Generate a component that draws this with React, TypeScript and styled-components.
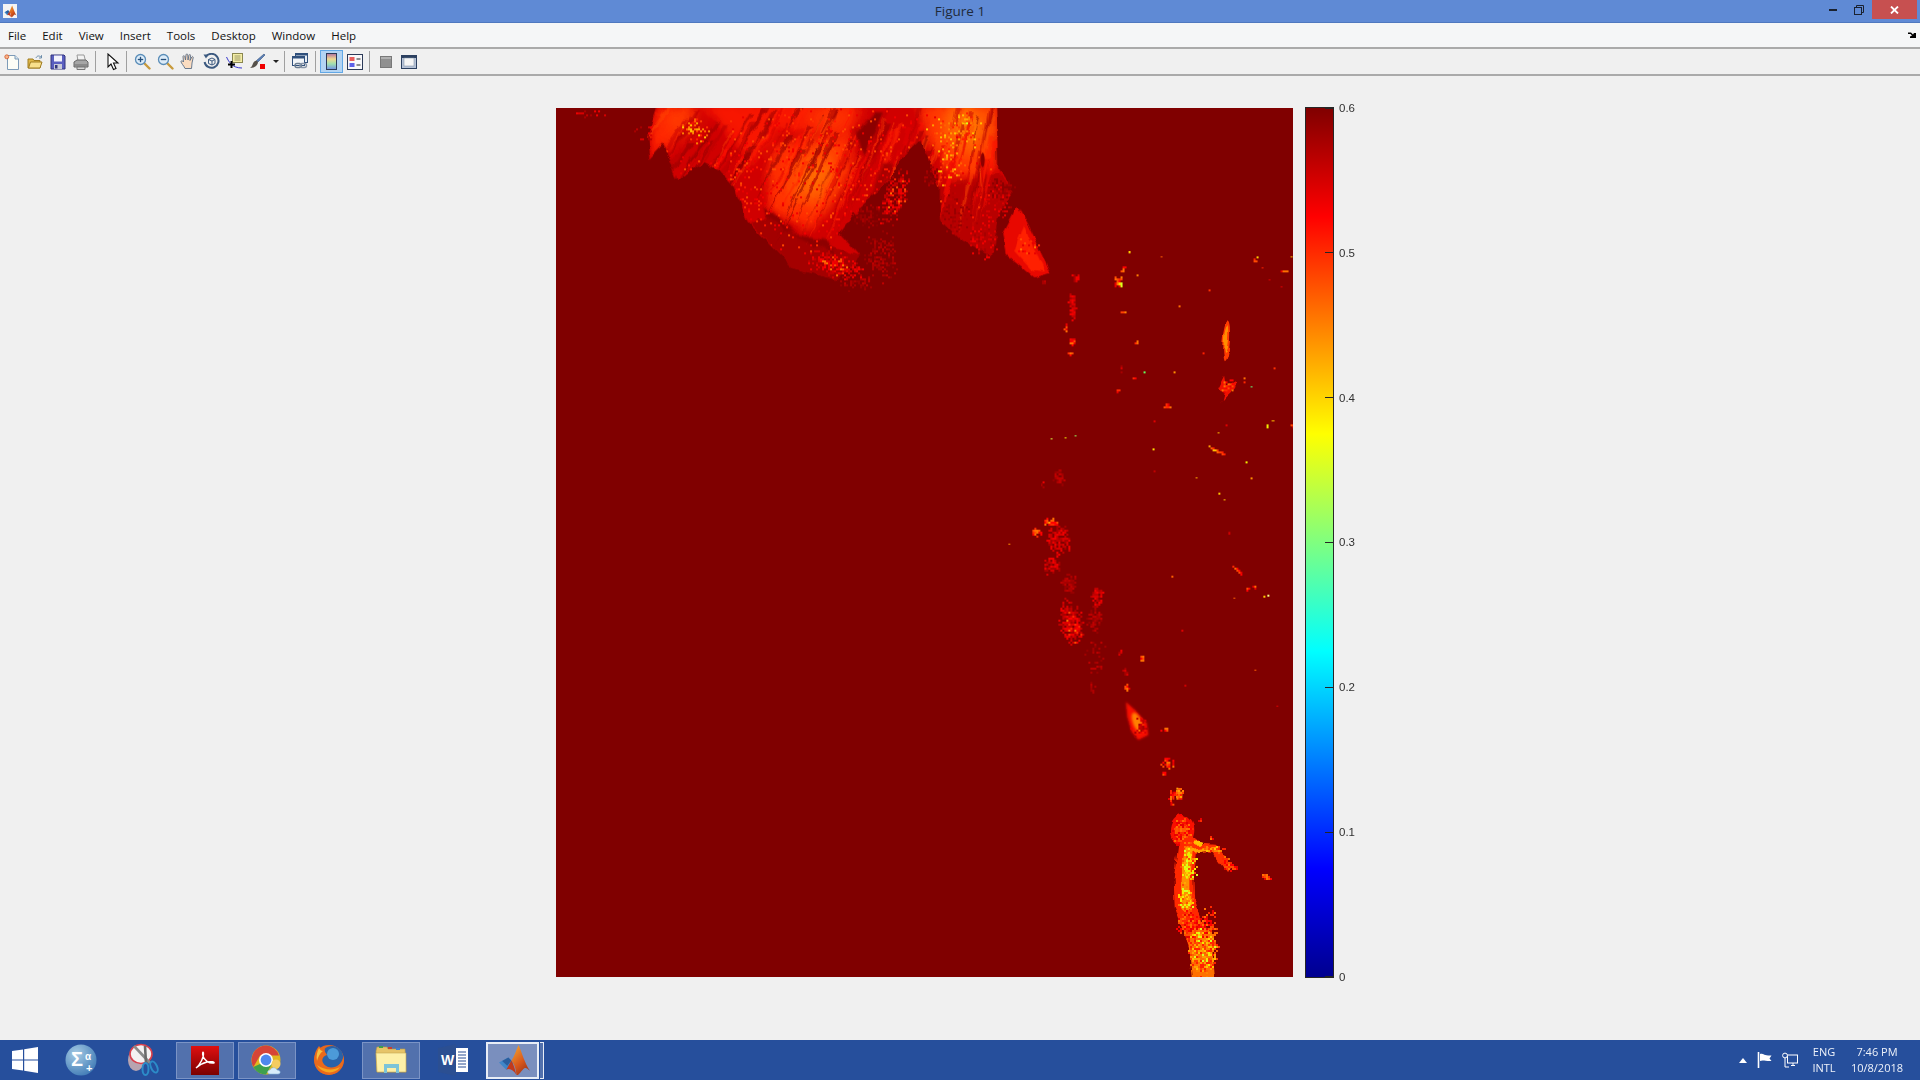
import React from "react";
import styled, { createGlobalStyle } from "styled-components";

const GlobalStyle = createGlobalStyle`
  html, body {
    margin: 0;
    height: 100%;
    overflow: hidden;
    background: #f0f0f0;
    font-family: "Open Sans", "Liberation Sans", sans-serif;
  }
`;

const menuItems = ["File", "Edit", "View", "Insert", "Tools", "Desktop", "Window", "Help"];
const colorbarTicks = ["0.6", "0.5", "0.4", "0.3", "0.2", "0.1", "0"];

type Palette = "faint" | "dim" | "hot" | "flame" | "fire" | "dark" | "grain";
const palettes: Record<Palette, string[]> = {
  faint: ["#980000", "#a40000", "#b00000", "#c00000"],
  dim: ["#a80000", "#c00000", "#d80000", "#f00000"],
  hot: ["#e80000", "#ff0000", "#ff2800", "#ff4c00", "#ff7000"],
  flame: ["#ff2000", "#ff4000", "#ff6000", "#ff8000", "#ffa000", "#ffc000"],
  fire: ["#ff5000", "#ff8000", "#ffa800", "#ffd000", "#f0f000", "#d8ff20"],
  dark: ["#8c0000", "#980000", "#a80000"],
  grain: ["#e80000", "#f40000", "#ff1800", "#ff3000", "#ff4800"],
};

// x, y, rx, ry, angle, count, palette - coordinates in the crop's own units
type Cluster = [number, number, number, number, number, number, Palette];

function makeRandom(seed: number) {
  let s = seed;
  return () => {
    s = (s + 0x6d2b79f5) | 0;
    let t = Math.imul(s ^ (s >>> 15), 1 | s);
    t = (t + Math.imul(t ^ (t >>> 7), 61 | t)) ^ t;
    return ((t ^ (t >>> 14)) >>> 0) / 4294967296;
  };
}

function Specks({ clusters, seed, cell = 6 }: { clusters: Cluster[]; seed: number; cell?: number }) {
  const random = makeRandom(seed);
  const rects: React.ReactNode[] = [];
  clusters.forEach(([cx, cy, rx, ry, angle, count, palette], i) => {
    const colours = palettes[palette];
    const a = (angle * Math.PI) / 180;
    for (let n = 0; n < count; n++) {
      const r = Math.sqrt(random()) * (0.5 + 0.5 * random());
      const t = random() * Math.PI * 2;
      const dx = Math.cos(t) * r * rx;
      const dy = Math.sin(t) * r * ry;
      const x = cx + dx * Math.cos(a) - dy * Math.sin(a);
      const y = cy + dx * Math.sin(a) + dy * Math.cos(a);
      rects.push(
        <rect
          key={`${i}-${n}`}
          x={Math.round(x / cell) * cell}
          y={Math.round(y / cell) * cell}
          width={cell}
          height={cell}
          fill={colours[Math.floor(random() * colours.length)]}
        />
      );
    }
  });
  return <g shapeRendering="crispEdges">{rects}</g>;
}

// tapered streaks fanning down-left from the top edge of the plume
function Streaks({ seed, count }: { seed: number; count: number }) {
  const random = makeRandom(seed);
  const colours = ["#8c0000", "#a00000", "#b80000", "#ff2000", "#ff4400", "#e00000", "#ff1000", "#980000", "#c80000"];
  const items: React.ReactNode[] = [];
  for (let i = 0; i < count; i++) {
    const x = 130 + random() * 1000;
    const y = 10 + random() * 200;
    const lean = -0.7 + (0.55 * (x - 130)) / 1000;
    const length = 70 + random() * 220;
    const width = 4 + random() * 16;
    const colour = colours[Math.floor(random() * colours.length)];
    items.push(
      <path
        key={i}
        d={`M${x} ${y} L${x + width} ${y} L${x + lean * length} ${y + length} Z`}
        fill={colour}
        opacity={0.55}
      />
    );
  }
  return <g>{items}</g>;
}

const plumeOutline =
  "M115 10 L82 110 L88 178 L130 130 L172 238 L250 190 L300 215 L342 262 L382 362 L520 505 L650 540 L720 470 L660 400 L720 320 L800 250 L840 180 L900 120 L960 260 L960 360 L1020 420 L1115 470 L1140 340 L1180 270 L1135 210 L1128 10 Z M1192 320 L1222 370 L1292 520 L1240 532 L1160 465 L1150 400 Z";

const plumeGrain: Cluster[] = [[620, 230, 540, 260, 0, 650, "grain"]];

const plumeSpecks: Cluster[] = [
  [-90, 38, 70, 14, 0, 12, "dim"],
  [70, 95, 40, 40, 0, 14, "dim"],
  [1010, 90, 100, 70, 0, 90, "flame"],
  [1040, 60, 12, 24, 0, 16, "fire"],
  [225, 85, 60, 45, 20, 40, "flame"],
  [985, 190, 55, 70, 0, 50, "flame"],
  [935, 225, 30, 40, 0, 34, "dark"],
  [1140, 265, 45, 35, 0, 120, "dark"],
  [1125, 300, 55, 70, 0, 60, "dim"],
  [740, 345, 45, 40, 0, 70, "dark"],
  [820, 290, 45, 105, 15, 180, "dim"],
  [830, 280, 35, 90, 15, 30, "hot"],
  [780, 465, 60, 85, 0, 130, "faint"],
  [640, 490, 95, 45, 15, 240, "dim"],
  [640, 490, 70, 30, 15, 40, "hot"],
  [710, 545, 55, 35, 0, 45, "faint"],
  [1090, 410, 50, 75, 0, 90, "dim"],
  [1000, 340, 55, 75, 0, 90, "faint"],
  [1220, 440, 40, 40, 0, 20, "hot"],
  [1268, 545, 12, 6, 0, 6, "dim"],
];

const midSpecks: Cluster[] = [
  [160, 82, 16, 11, 0, 30, "dim"],
  [150, 160, 13, 50, 0, 80, "dim"],
  [130, 228, 5, 12, 0, 10, "hot"],
  [150, 265, 14, 14, 0, 26, "hot"],
  [145, 300, 6, 10, 0, 8, "hot"],
  [285, 92, 11, 20, 0, 28, "hot"],
  [290, 92, 6, 20, 0, 6, "fire"],
  [300, 52, 5, 14, 35, 8, "hot"],
  [300, 180, 7, 2, 0, 5, "flame"],
  [340, 268, 3, 6, 0, 4, "hot"],
  [293, 342, 5, 14, 0, 6, "dim"],
  [333, 372, 6, 6, 0, 5, "hot"],
  [285, 410, 7, 3, 0, 4, "hot"],
  [430, 455, 12, 8, 0, 14, "hot"],
  [605, 400, 24, 28, 0, 24, "hot"],
  [652, 382, 3, 14, 0, 6, "hot"],
  [718, 515, 2, 12, 0, 5, "fire"],
  [575, 585, 34, 3, 32, 18, "flame"],
  [110, 665, 18, 26, 0, 36, "faint"],
  [62, 682, 6, 8, 0, 4, "dim"],
  [795, 512, 8, 5, 0, 6, "hot"],
  [768, 60, 14, 4, -15, 6, "hot"],
  [685, 28, 14, 3, 40, 6, "hot"],
];

const midPoints: [number, number, string][] = [
  [90, 550, "#d8ff40"], [158, 541, "#90ff60"], [130, 547, "#f0f000"], [388, 580, "#ffe000"],
  [361, 355, "#60ff60"], [450, 355, "#ff9000"], [596, 728, "#ffc800"], [514, 664, "#ffb000"],
  [675, 398, "#60ff80"], [579, 532, "#ffc000"], [660, 619, "#f0f000"], [737, 497, "#ffc000"],
  [693, 20, "#ffd000"], [318, 4, "#ffd000"], [411, 18, "#ff6000"], [463, 163, "#ff7000"],
  [675, 666, "#ff9000"], [342, 72, "#ff8000"], [790, 18, "#ffc000"], [534, 300, "#ff2000"],
  [742, 343, "#ff3000"], [600, 511, "#e00000"], [390, 499, "#e00000"], [390, 645, "#c00000"],
  [550, 115, "#ff3000"], [705, 50, "#ff2000"], [762, 105, "#e00000"], [727, 85, "#e00000"],
];

const lowerSpecks: Cluster[] = [
  [150, 95, 22, 18, 0, 28, "hot"],
  [105, 125, 20, 14, 0, 24, "hot"],
  [150, 92, 10, 8, 0, 5, "flame"],
  [172, 150, 42, 54, 0, 150, "dim"],
  [150, 225, 30, 28, 0, 60, "dim"],
  [205, 280, 26, 34, 0, 70, "faint"],
  [210, 395, 40, 76, -10, 320, "dim"],
  [215, 410, 28, 58, -10, 24, "hot"],
  [290, 320, 20, 38, 0, 65, "dim"],
  [278, 385, 28, 46, 0, 80, "faint"],
  [285, 500, 38, 62, 0, 32, "faint"],
  [275, 592, 12, 20, 0, 10, "faint"],
  [358, 488, 6, 12, 0, 9, "dim"],
  [425, 505, 5, 15, 0, 9, "hot"],
  [373, 545, 7, 18, -15, 16, "dim"],
  [377, 592, 9, 16, 0, 16, "hot"],
  [420, 710, 30, 38, 0, 36, "dim"],
  [493, 718, 12, 5, 0, 8, "hot"],
  [500, 815, 22, 22, -30, 26, "hot"],
  [490, 852, 6, 10, 0, 6, "hot"],
  [515, 925, 10, 30, 0, 14, "hot"],
  [533, 912, 18, 18, 0, 24, "flame"],
  [712, 240, 26, 2, 40, 12, "hot"],
  [760, 292, 2, 14, 0, 6, "hot"],
  [740, 296, 7, 2, 0, 3, "hot"],
];

const lowerPoints: [number, number, string][] = [
  [656, 8, "#ffc800"], [25, 160, "#ff9000"], [514, 258, "#ff6000"], [790, 318, "#ffd000"],
  [802, 314, "#ffff80"], [700, 322, "#ff6000"], [763, 538, "#ff6000"], [545, 420, "#e00000"],
  [685, 126, "#c00000"], [685, 128, "#d00000"], [554, 584, "#d00000"], [830, 646, "#e00000"],
];

const tailSpecks: Cluster[] = [
  [185, 150, 38, 54, 0, 110, "hot"],
  [237, 120, 7, 7, 0, 8, "hot"],
  [175, 40, 14, 18, 0, 30, "flame"],
  [150, 50, 5, 25, 0, 14, "hot"],
  [205, 250, 30, 58, 0, 60, "fire"],
  [195, 350, 28, 48, 0, 50, "fire"],
  [205, 430, 40, 54, 0, 130, "hot"],
  [248, 510, 52, 90, 0, 380, "flame"],
  [248, 510, 36, 78, 0, 50, "fire"],
  [265, 440, 30, 74, 0, 80, "hot"],
  [280, 205, 38, 10, 5, 40, "flame"],
  [320, 250, 16, 28, -30, 30, "hot"],
  [345, 258, 12, 10, 0, 10, "hot"],
  [275, 172, 10, 5, 0, 6, "hot"],
  [437, 290, 16, 9, 20, 26, "hot"],
  [180, 440, 10, 25, 0, 8, "hot"],
];

const Page = styled.div`
  height: 100vh;
  display: flex;
  flex-direction: column;
  overflow: hidden;
`;

const TitleBar = styled.header`
  box-sizing: border-box;
  height: 23px;
  display: grid;
  grid-template-columns: 1fr auto 1fr;
  align-items: start;
  background: #5f8ad5;
  border-bottom: 1px solid #4f78bf;
`;

const AppIcon = styled.div`
  width: 14px;
  height: 14px;
  margin: 4px 0 0 3px;
  background: #f4f4f4;
  display: flex;
  align-items: center;
  justify-content: center;
`;

const Title = styled.div`
  font-size: 13.5px;
  line-height: 22px;
  color: #1f2a3a;
`;

const WindowControls = styled.div`
  display: flex;
  justify-content: flex-end;
  margin-right: 3px;
`;

const ControlButton = styled.div<{ $close?: boolean }>`
  width: ${(p) => (p.$close ? 45 : 26)}px;
  height: 19px;
  display: flex;
  align-items: center;
  justify-content: center;
  background: ${(p) => (p.$close ? "#c75050" : "transparent")};
`;

const MenuBar = styled.nav`
  box-sizing: border-box;
  height: 26px;
  display: flex;
  align-items: center;
  background: #f5f6f7;
  border-bottom: 2px solid #aaaaaa;
  font-size: 11.5px;
  color: #111;
`;

const MenuItem = styled.span`
  padding: 0 8px;
`;

const UndockArrow = styled.div`
  margin-left: auto;
  margin-right: 4px;
  display: flex;
`;

const ToolBar = styled.div`
  box-sizing: border-box;
  height: 27px;
  display: flex;
  align-items: center;
  background: #f0f0f0;
  border-bottom: 2px solid #aaaaaa;
`;

const ToolButton = styled.div<{ $active?: boolean }>`
  box-sizing: border-box;
  width: 23px;
  height: 23px;
  flex: none;
  display: flex;
  align-items: center;
  justify-content: center;
  background: ${(p) => (p.$active ? "#b3d4f3" : "transparent")};
  border: 1px solid ${(p) => (p.$active ? "#62a8e6" : "transparent")};
`;

const ToolSeparator = styled.div<{ $before: number; $after: number }>`
  width: 1px;
  height: 21px;
  flex: none;
  background: #a0a0a0;
  margin: 0 ${(p) => p.$after}px 0 ${(p) => p.$before}px;
`;

const DropArrow = styled.div`
  width: 0;
  height: 0;
  margin: 0 0 0 4px;
  border-left: 3px solid transparent;
  border-right: 3px solid transparent;
  border-top: 3px solid #222;
`;

const FigureArea = styled.main`
  flex: 1;
  display: flex;
  align-items: flex-start;
  padding: 31px 0 0 556px;
  background: #f0f0f0;
`;

const HeatmapFrame = styled.div`
  width: 737px;
  height: 869px;
  flex: none;
  background: #800000;
  margin-top: 1px;
`;

const Colorbar = styled.div`
  box-sizing: border-box;
  width: 29px;
  height: 871px;
  margin-left: 12px;
  flex: none;
  border: 1px solid #262626;
  background: linear-gradient(
    to bottom,
    #800000 0%,
    #ff0000 12.5%,
    #ffff00 37.5%,
    #00ffff 62.5%,
    #0000ff 87.5%,
    #00008f 100%
  );
`;

const TickColumn = styled.div`
  height: 869px;
  margin-top: 1px;
  flex: none;
  display: flex;
  flex-direction: column;
  justify-content: space-between;
`;

const Tick = styled.div`
  position: relative;
  height: 0;
  display: flex;
  align-items: center;
  padding-left: 5px;
  font-family: "Liberation Sans", Arial, sans-serif;
  font-size: 11.5px;
  color: #303030;

  &::before {
    content: "";
    position: absolute;
    left: -9px;
    width: 8px;
    height: 1px;
    background: #262626;
  }
`;

const Taskbar = styled.footer`
  height: 40px;
  flex: none;
  display: flex;
  align-items: stretch;
  background: #264f9c;
  color: #fff;
`;

const StartButton = styled.div`
  width: 50px;
  display: flex;
  align-items: center;
  justify-content: center;
`;

const TaskSlot = styled.div<{ $state?: "open" | "active" }>`
  box-sizing: border-box;
  width: 58px;
  margin: 2px 2px 1px;
  padding-bottom: 1px;
  display: flex;
  align-items: center;
  justify-content: center;
  border: ${(p) => (p.$state === "active" ? "2px solid #e8edf6" : p.$state === "open" ? "1px solid #7b94c6" : "1px solid transparent")};
  background: ${(p) => (p.$state === "active" ? "#7a8fbe" : p.$state === "open" ? "#5271ad" : "transparent")};
`;

const ActiveGroup = styled.div`
  display: flex;
  align-items: stretch;
  margin-left: 2px;
`;

const ActiveSlot = styled(TaskSlot)`
  width: 53px;
  margin: 2px 1px 1px 0;
  padding-left: 3px;
`;

const StackEdge = styled.div`
  box-sizing: border-box;
  width: 4px;
  margin: 2px 0 1px;
  border: 1px solid #e8edf6;
  border-left: none;
  background: #5271ad;
`;

const Tray = styled.div`
  margin-left: auto;
  display: flex;
  align-items: center;
`;

const TrayIcon = styled.div<{ $width: number }>`
  width: ${(p) => p.$width}px;
  display: flex;
  align-items: center;
  justify-content: center;
`;

const TrayText = styled.div<{ $width: number; $gap?: number }>`
  width: ${(p) => p.$width}px;
  margin-left: ${(p) => p.$gap ?? 0}px;
  text-align: center;
  font-size: 11px;
  line-height: 16px;
  color: #eef2fa;
  white-space: nowrap;
`;

const SigmaBadge = styled.text`
  font-family: "Liberation Sans", Arial, sans-serif;
  font-weight: 700;
  fill: #fff;
`;

const WordLetter = styled.text`
  font-family: "Liberation Sans", Arial, sans-serif;
  font-weight: 700;
  font-size: 14px;
  fill: #fff;
`;

function MatlabLogo({ size }: { size: number }) {
  return (
    <svg width={size} height={size} viewBox="0 0 32 32">
      <defs>
        <linearGradient id={`mlb${size}`} x1="0.2" y1="0" x2="0.8" y2="1">
          <stop offset="0" stopColor="#f0a030" />
          <stop offset="0.55" stopColor="#d8581c" />
          <stop offset="1" stopColor="#96301a" />
        </linearGradient>
      </defs>
      <path d="M1 18 L10 13 L15 19 L8 25 Z" fill="#3f86c8" />
      <path d="M10 13 L13 16 L9 21 L4 16.5 Z" fill="#2a5e9e" />
      <path d="M20 1 C23 8 26 19 31 26 C28 23 26 22 24 25 C22 27 20 31 18 30 C17 23 16 20 13 16 C16 12 18 5 20 1 Z" fill={`url(#mlb${size})`} />
      <path d="M13 16 C15 20 16 23 18 30 C15 26 12 23 8 25 C10 22 11 19 13 16 Z" fill="#c23a1c" />
    </svg>
  );
}

const NewIcon = () => (
  <svg width="16" height="16" viewBox="0 0 16 16">
    <path d="M3.5 1.5 H11 L14.5 5 V15.5 H3.5 Z" fill="#fdfdf6" stroke="#7d9bb8" />
    <path d="M11 1.5 V5 H14.5" fill="#d7e4f0" stroke="#7d9bb8" />
    <circle cx="2.8" cy="2.8" r="2" fill="#f7b48a" stroke="#d4582a" strokeWidth="0.8" />
  </svg>
);

const OpenIcon = () => (
  <svg width="16" height="16" viewBox="0 0 16 16">
    <path d="M1 14 V5 H6 L7 6.5 H13 V14 Z" fill="#e0b848" stroke="#a07c20" />
    <path d="M1.5 14 L3.5 8 H15 L13 14 Z" fill="#f8e08c" stroke="#a07c20" />
    <path d="M9 4 C10 1.5 12 1.5 14 3" fill="none" stroke="#6b8caa" />
    <path d="M14.5 1.2 V4 H12" fill="none" stroke="#6b8caa" />
  </svg>
);

const SaveIcon = () => (
  <svg width="16" height="16" viewBox="0 0 16 16">
    <path d="M1 1 H14 L15 2 V15 H1 Z" fill="#5a5fc0" stroke="#32357c" />
    <rect x="4" y="1.5" width="8" height="6" fill="#f4f4fc" />
    <rect x="4" y="10" width="8" height="5" fill="#c9cbd8" />
    <rect x="5" y="11" width="2.5" height="3.5" fill="#32357c" />
  </svg>
);

const PrintIcon = () => (
  <svg width="16" height="16" viewBox="0 0 16 16">
    <path d="M4 1 L11 1 L12.5 7 H5 Z" fill="#f2f2f2" stroke="#999" />
    <path d="M1 8 L4 6 H13 L15 8 V13 H1 Z" fill="#a6a6a6" stroke="#666" />
    <path d="M1.5 11 H14.5" stroke="#6e6e6e" />
    <path d="M4 13 H12 V15.5 H4 Z" fill="#d8d8d8" stroke="#777" />
  </svg>
);

const PointerIcon = () => (
  <svg width="13" height="18" viewBox="0 0 13 18">
    <path d="M1 1 V14 L4 11 L6.5 16.5 L9 15.5 L6.5 10 H11 Z" fill="#fff" stroke="#111" strokeWidth="1.1" />
  </svg>
);

const ZoomIcon = ({ plus }: { plus?: boolean }) => (
  <svg width="17" height="17" viewBox="0 0 17 17">
    <path d="M10 10 L15.5 15.5" stroke="#c89a3c" strokeWidth="2.4" strokeLinecap="round" />
    <circle cx="6.5" cy="6.5" r="5" fill="#dcebf8" stroke="#5a8db8" strokeWidth="1.3" />
    <path d="M3.8 6.5 H9.2" stroke="#27507c" strokeWidth="1.3" />
    {plus && <path d="M6.5 3.8 V9.2" stroke="#27507c" strokeWidth="1.3" />}
  </svg>
);

const HandIcon = () => (
  <svg width="17" height="17" viewBox="0 0 17 17">
    <path
      d="M5 15.5 C4 13 1 10 1 8.5 C1 7.5 2.5 7.5 3.5 9 L3 3.5 C3 2.5 4.5 2.5 4.8 3.5 L5.5 7 L6 1.8 C6.2 0.7 7.7 0.7 7.8 1.8 L8 7 L9 2.2 C9.3 1.2 10.7 1.4 10.6 2.5 L10 7.5 L11.8 4 C12.3 3.2 13.5 3.6 13.2 4.6 L12 10 C11.5 12 12 14 11.5 15.5 Z"
      fill="#fbdcc0"
      stroke="#5a6d85"
      strokeWidth="0.9"
    />
  </svg>
);

const RotateIcon = () => (
  <svg width="17" height="17" viewBox="0 0 17 17">
    <path d="M3 3.5 A7 7 0 1 1 1.6 9" fill="none" stroke="#3c5a80" strokeWidth="2" />
    <path d="M0.5 1.5 L5.5 1.5 L3 5.5 Z" fill="#3c5a80" />
    <path d="M5.5 6.5 L9 5 L12 6.5 V10.5 L9 12 L5.5 10.5 Z M5.5 6.5 L9 8 L12 6.5 M9 8 V12" fill="none" stroke="#3c5a80" />
  </svg>
);

const DataCursorIcon = () => (
  <svg width="17" height="17" viewBox="0 0 17 17">
    <path d="M0.5 4 C3 9 6 15 16 15" fill="none" stroke="#2020c8" strokeWidth="0.9" />
    <rect x="6.5" y="0.5" width="10" height="9" fill="#f4eea6" stroke="#8a8650" />
    <path d="M8.5 3 H14.5 M8.5 5 H14.5 M8.5 7 H14.5" stroke="#9c9868" />
    <path d="M2 11.5 H9 M5.5 8 V15" stroke="#000" strokeWidth="2" />
  </svg>
);

const BrushIcon = () => (
  <svg width="17" height="17" viewBox="0 0 17 17">
    <path d="M15 1 L16 2 L9 9 L7.5 7.5 Z" fill="#5a80b8" stroke="#34507c" strokeWidth="0.6" />
    <path d="M7.5 7.5 L9 9 C9 12 6 15 1 15 C3.5 13.5 3.5 11 4.5 9.5 C5.5 8 6.5 7.8 7.5 7.5 Z" fill="#55504a" />
    <rect x="11" y="11" width="5" height="5" fill="#f00000" />
  </svg>
);

const LinkIcon = () => (
  <svg width="17" height="17" viewBox="0 0 17 17">
    <rect x="3.5" y="0.5" width="12" height="9" fill="#e6edf4" stroke="#30507c" />
    <rect x="3.5" y="0.5" width="12" height="2" fill="#30507c" />
    <rect x="0.5" y="3.5" width="12" height="9" fill="#f2f5f8" stroke="#30507c" />
    <rect x="0.5" y="3.5" width="12" height="2" fill="#30507c" />
    <rect x="3" y="10.5" width="6.5" height="4" rx="2" fill="none" stroke="#6a7c90" strokeWidth="1.4" />
    <rect x="8" y="10.5" width="6.5" height="4" rx="2" fill="none" stroke="#8795a8" strokeWidth="1.4" />
  </svg>
);

const ColorbarIcon = () => (
  <svg width="11" height="17" viewBox="0 0 11 17">
    <defs>
      <linearGradient id="cbi" x1="0" y1="0" x2="0" y2="1">
        <stop offset="0" stopColor="#b070a0" />
        <stop offset="0.35" stopColor="#f0d890" />
        <stop offset="0.65" stopColor="#a0e0b0" />
        <stop offset="1" stopColor="#7090e8" />
      </linearGradient>
    </defs>
    <rect x="0.5" y="0.5" width="10" height="16" fill="url(#cbi)" stroke="#2c3a58" />
  </svg>
);

const LegendIcon = () => (
  <svg width="16" height="16" viewBox="0 0 16 16">
    <rect x="0.5" y="0.5" width="15" height="15" fill="#f8f8fa" stroke="#2c3a58" />
    <rect x="2.5" y="3" width="5" height="4" fill="#e85c5c" />
    <rect x="2.5" y="9" width="5" height="4" fill="#5c60e8" />
    <path d="M9.5 5 H13.5 M9.5 11 H13.5" stroke="#222" />
  </svg>
);

const HideIcon = () => (
  <svg width="12" height="12" viewBox="0 0 12 12">
    <rect x="0.5" y="0.5" width="11" height="11" fill="#909090" stroke="#787878" />
    <rect x="1" y="1" width="10" height="2" fill="#b0b0b0" />
  </svg>
);

const DockIcon = () => (
  <svg width="16" height="14" viewBox="0 0 16 14">
    <rect x="0.5" y="0.5" width="15" height="13" fill="#b8c4d8" stroke="#2c4060" />
    <rect x="1" y="1" width="14" height="2" fill="#2c4060" />
    <rect x="3" y="3" width="10" height="8" fill="#f6f6f6" stroke="#7a8aa0" strokeWidth="0.5" />
  </svg>
);

const WindowsLogo = () => (
  <svg width="26" height="26" viewBox="0 0 26 26">
    <path d="M0 4 L11 2.4 V12.4 H0 Z M12.2 2.2 L26 0 V12.4 H12.2 Z M0 13.6 H11 V23.6 L0 22 Z M12.2 13.6 H26 V26 L12.2 23.8 Z" fill="#fff" />
  </svg>
);

const SigmaIcon = () => (
  <svg width="32" height="34" viewBox="0 0 32 34">
    <defs>
      <radialGradient id="sig" cx="0.35" cy="0.3" r="0.8">
        <stop offset="0" stopColor="#a6cbe4" />
        <stop offset="1" stopColor="#3c78b4" />
      </radialGradient>
    </defs>
    <circle cx="16" cy="17" r="15.5" fill="url(#sig)" />
    <SigmaBadge x="6" y="23" fontSize="20">Σ</SigmaBadge>
    <SigmaBadge x="20" y="17" fontSize="10">α</SigmaBadge>
    <SigmaBadge x="21" y="29" fontSize="11">+</SigmaBadge>
  </svg>
);

const SnipIcon = () => (
  <svg width="32" height="34" viewBox="0 0 32 34">
    <ellipse cx="9" cy="17" rx="8" ry="11" fill="#b8a4b0" />
    <ellipse cx="14" cy="11" rx="11" ry="9.5" fill="#f4f2f2" stroke="#d8404c" strokeWidth="1.6" />
    <path d="M7 3 L23 20" stroke="#8a8a8a" strokeWidth="2.6" />
    <path d="M18 3 L19 20" stroke="#6a6a6a" strokeWidth="2.6" />
    <ellipse cx="18.5" cy="26" rx="3" ry="6" fill="none" stroke="#2c8cc8" strokeWidth="2" />
    <ellipse cx="27" cy="24" rx="3" ry="6" transform="rotate(-25 27 24)" fill="none" stroke="#2c8cc8" strokeWidth="2" />
  </svg>
);

const AcrobatIcon = () => (
  <svg width="28" height="29" viewBox="0 0 28 29">
    <defs>
      <linearGradient id="acr" x1="0" y1="0" x2="0" y2="1">
        <stop offset="0" stopColor="#e01010" />
        <stop offset="1" stopColor="#7a0000" />
      </linearGradient>
    </defs>
    <rect width="28" height="29" fill="url(#acr)" />
    <path d="M5 22 C9 19 13 11 12.5 7 C12 5 11 7 12 10 C13 14 18 18 23 17 C24 16 20 15 16 16 C12 17 8 19 5 22 Z" fill="none" stroke="#fff" strokeWidth="1.3" />
  </svg>
);

const ChromeIcon = () => (
  <svg width="32" height="34" viewBox="0 0 32 34">
    <circle cx="15" cy="17" r="14.5" fill="#e0b820" />
    <path d="M15 2.5 A14.5 14.5 0 0 0 2.4 24 L9 12.5 H28 A14.5 14.5 0 0 0 15 2.5 Z" fill="#d64437" />
    <path d="M2.4 24 A14.5 14.5 0 0 0 15 31.5 L21 21 H9 Z" fill="#3ea04d" />
    <circle cx="15" cy="17" r="7" fill="#fff" />
    <circle cx="15" cy="17" r="5.4" fill="#4f88ee" />
    <circle cx="25" cy="21" r="4.5" fill="#f4cc60" />
    <path d="M19 31 C16 31 16 27 19 27 C20 24 25 24 26 27 C30 27 30 31 27 31 Z" fill="#d8ecfa" stroke="#8ab8dc" strokeWidth="0.6" />
  </svg>
);

const FirefoxIcon = () => (
  <svg width="32" height="34" viewBox="0 0 32 34">
    <circle cx="16" cy="17" r="15" fill="#e8661c" />
    <circle cx="19" cy="14" r="11" fill="#2a62a8" />
    <circle cx="20" cy="11" r="6" fill="#4c9ad8" />
    <path d="M6 3 C1 9 0 17 3 24 C7 33 22 35 28 25 C31 20 31 17 30.5 14 C28 23 20 27 13 23 C7 19 9 13 14 12 C13 10 11 9 12 6 C10 7 8 6 6 3 Z" fill="#ea6a1c" />
    <path d="M4 22 C9 31 22 32 27 24 C20 28 11 27 4 22 Z" fill="#f6a820" />
    <path d="M6 5 C4 9 3 13 4 18 C5 14 7 10 10 8 C8 8 7 7 6 5 Z" fill="#f6c040" />
  </svg>
);

const ExplorerIcon = () => (
  <svg width="32" height="32" viewBox="0 0 32 32">
    <path d="M1 7 L2 3 H12 L13 5 H30 L31 28 H2 Z" fill="#e6c468" stroke="#b89a48" strokeWidth="0.6" />
    <rect x="4" y="2" width="4" height="2" fill="#3ea04d" />
    <rect x="13" y="3" width="4" height="2" fill="#c84030" />
    <rect x="21" y="4" width="4" height="2" fill="#3c80d0" />
    <path d="M1 9 H31 L31 28 H2 Z" fill="#fdf0a8" stroke="#c8a850" strokeWidth="0.6" />
    <path d="M9 29 V20 H24 V29 H21 V24 H12 V29 Z" fill="#7cc4d8" />
  </svg>
);

const WordIcon = () => (
  <svg width="30" height="32" viewBox="0 0 30 32">
    <path d="M0 4 L18 0 V32 L0 28 Z" fill="#2b4f92" />
    <rect x="18" y="4" width="12" height="24" fill="#fff" />
    <path d="M20 8 H28 M20 11 H28 M20 14 H28 M20 17 H28 M20 20 H28 M20 23 H28" stroke="#2b4f92" strokeWidth="1" />
    <WordLetter x="3" y="21">W</WordLetter>
  </svg>
);

const TrayArrow = () => (
  <svg width="8" height="5" viewBox="0 0 8 5">
    <path d="M0 5 L4 0 L8 5 Z" fill="#fff" />
  </svg>
);

const FlagIcon = () => (
  <svg width="15" height="16" viewBox="0 0 15 16">
    <path d="M1.5 0 V16" stroke="#fff" strokeWidth="1.6" />
    <path d="M3 2 C6 1 7 4 14.5 3.5 L12.5 6.5 L14.5 9 C9 9.5 6 7.5 3 9 Z" fill="#fff" />
  </svg>
);

const NetworkIcon = () => (
  <svg width="16" height="16" viewBox="0 0 16 16">
    <rect x="5.5" y="3" width="10" height="8" fill="none" stroke="#fff" />
    <path d="M9 13.5 H13 M11 11 V13.5" stroke="#fff" />
    <circle cx="3" cy="3.5" r="2.4" fill="#264f9c" stroke="#fff" />
    <path d="M3 6 V15 H7" fill="none" stroke="#fff" />
  </svg>
);

function Heatmap() {
  return (
    <svg width="737" height="869" viewBox="556 108 737 869">
      <defs>
        <filter id="soft" x="-20%" y="-20%" width="140%" height="140%">
          <feGaussianBlur stdDeviation="14" />
        </filter>
        <filter id="softer" x="-30%" y="-30%" width="160%" height="160%">
          <feGaussianBlur stdDeviation="30" />
        </filter>
        <filter id="tight" x="-30%" y="-30%" width="160%" height="160%">
          <feGaussianBlur stdDeviation="3" />
        </filter>
        <filter id="rough" x="-10%" y="-10%" width="120%" height="120%" colorInterpolationFilters="sRGB">
          <feTurbulence type="fractalNoise" baseFrequency="0.03 0.015" numOctaves="3" seed="4" result="noise" />
          <feDisplacementMap in="SourceGraphic" in2="noise" scale="22" xChannelSelector="R" yChannelSelector="G" />
          <feGaussianBlur stdDeviation="1" />
        </filter>
        <clipPath id="plumeClip">
          <path d={plumeOutline} />
        </clipPath>
      </defs>
      <rect x="556" y="108" width="737" height="869" fill="#800000" />

      {/* north plume, in the units of a 3x crop from (620,100) */}
      <g transform="translate(620 100) scale(0.3333)">
        <g filter="url(#rough)">
          <g clipPath="url(#plumeClip)">
            <path d={plumeOutline} fill="#d00000" />
            <path d="M395 370 L520 505 L650 540 L725 470 L640 440 L520 405 L450 350 Z" fill="#a40000" />
            <path d="M950 260 L1130 220 L1180 270 L1140 340 L1115 470 L1020 420 L960 360 Z" fill="#b80000" />
            <path d="M810 200 L880 130 L900 130 L860 320 L820 400 L770 330 Z" fill="#900000" />
            <path d="M730 320 L790 420 L720 470 L660 400 Z" fill="#980000" />
            <path d="M1192 320 L1222 370 L1292 520 L1240 532 L1160 465 L1150 400 Z" fill="#e80800" />
            <path d="M1210 380 L1275 515 L1235 510 L1180 450 Z" fill="#ff2000" />
            <g filter="url(#soft)">
              <path d="M470 130 L700 110 L690 220 L620 340 L560 390 L450 330 L440 220 Z" fill="#ff2c00" />
              <path d="M240 10 L720 10 L690 110 L470 90 L395 200 L330 100 Z" fill="#f81800" />
              <path d="M890 10 L1125 10 L1130 200 L1010 240 L930 140 Z" fill="#ff3000" />
              <path d="M120 20 L230 20 L170 120 L100 165 L90 120 Z" fill="#ff2000" />
            </g>
            <g filter="url(#softer)">
              <path d="M520 160 L650 130 L650 230 L590 310 L490 300 Z" fill="#ff5000" />
              <ellipse cx="590" cy="240" rx="38" ry="70" transform="rotate(20 590 240)" fill="#ff7400" />
              <path d="M960 20 L1110 20 L1100 150 L1000 170 Z" fill="#ff5c00" />
              <ellipse cx="1040" cy="75" rx="40" ry="45" fill="#ff8800" />
              <path d="M150 30 L235 30 L190 95 L140 110 Z" fill="#ff4800" />
              <path d="M560 20 L700 20 L680 90 L570 80 Z" fill="#ff3c00" />
            </g>
            <Streaks seed={7} count={150} />
            <g filter="url(#tight)">
              <path d="M430 320 L470 350 L520 400 L620 425 L650 462 L580 436 L500 395 L440 352 Z" fill="#8e0000" />
              <path d="M710 100 L760 40 L790 40 L730 170 Z" fill="#8c0000" />
              <path d="M700 440 L790 190 L815 190 L725 450 Z" fill="#a80000" />
            </g>
          </g>
        </g>
        <g clipPath="url(#plumeClip)">
          <Specks clusters={plumeGrain} seed={3} />
        </g>
        <ellipse cx="1088" cy="180" rx="6" ry="22" fill="#8c0000" />
        <path d="M1080 205 L1084 260" stroke="#ff5000" strokeWidth="2" />
        <Specks clusters={plumeSpecks} seed={11} />
      </g>

      {/* scattered spots, crop of 2.925x from (1020,250) */}
      <g transform="translate(1020 250) scale(0.3419)">
        <g filter="url(#rough)">
          <ellipse cx="603" cy="270" rx="11" ry="58" transform="rotate(4 603 270)" fill="#ff3a00" />
          <ellipse cx="602" cy="265" rx="6" ry="36" transform="rotate(6 602 265)" fill="#ff8c00" />
          <path d="M600 362 L606 400 L634 384 L628 408 L600 434 L590 445 L596 420 L580 402 Z" fill="#f01000" />
        </g>
        <Specks clusters={midSpecks} seed={23} />
        <g shapeRendering="crispEdges">
          {midPoints.map(([x, y, c]) => (
            <rect key={`${x}-${y}`} x={x} y={y} width="6" height="5" fill={c} />
          ))}
        </g>
      </g>

      {/* lower streak, 3x crop from (1000,490) */}
      <g transform="translate(1000 490) scale(0.3333)">
        <path d="M378 636 L405 660 L440 700 L445 735 L415 750 L395 725 L382 680 Z" fill="#f81000" filter="url(#tight)" />
        <ellipse cx="412" cy="698" rx="13" ry="32" transform="rotate(-22 412 698)" fill="#ff8000" filter="url(#tight)" />
        <Specks clusters={lowerSpecks} seed={37} />
        <g shapeRendering="crispEdges">
          {lowerPoints.map(([x, y, c]) => (
            <rect key={`${x}-${y}`} x={x} y={y} width="5" height="5" fill={c} />
          ))}
        </g>
      </g>

      {/* south tail, 3x crop from (1120,780) */}
      <g transform="translate(1120 780) scale(0.3333)">
        <g filter="url(#rough)">
          <ellipse cx="185" cy="150" rx="38" ry="48" fill="#f81000" />
          <ellipse cx="185" cy="155" rx="22" ry="26" fill="#ff5a00" />
          <g fill="none" strokeLinecap="round" strokeLinejoin="round">
            <path d="M205 200 L192 300 L195 375 L218 440 L245 520 L250 610" stroke="#ff2800" strokeWidth="62" />
            <path d="M210 200 L280 205 L322 260" stroke="#ff3000" strokeWidth="22" />
            <path d="M205 215 L198 300 L198 375" stroke="#ff9000" strokeWidth="32" />
            <path d="M215 215 L285 205" stroke="#ffa000" strokeWidth="10" />
            <path d="M240 470 L252 600" stroke="#ff7000" strokeWidth="72" />
            <path d="M203 225 L207 285" stroke="#e8f000" strokeWidth="16" />
            <path d="M198 350 L205 375" stroke="#ffd000" strokeWidth="14" />
            <path d="M228 190 L240 190" stroke="#ffc000" strokeWidth="14" />
          </g>
        </g>
        <Specks clusters={tailSpecks} seed={53} />
      </g>
    </svg>
  );
}

export default function App() {
  return (
    <>
      <GlobalStyle />
      <Page>
        <TitleBar>
          <AppIcon>
            <MatlabLogo size={13} />
          </AppIcon>
          <Title>Figure 1</Title>
          <WindowControls>
            <ControlButton>
              <svg width="8" height="2" viewBox="0 0 8 2">
                <rect width="8" height="2" fill="#1a2230" />
              </svg>
            </ControlButton>
            <ControlButton>
              <svg width="10" height="10" viewBox="0 0 10 10">
                <path d="M2.5 2.5 V0.5 H9.5 V7.5 H7.5" fill="none" stroke="#1a2230" />
                <rect x="0.5" y="2.5" width="7" height="7" fill="none" stroke="#1a2230" />
              </svg>
            </ControlButton>
            <ControlButton $close>
              <svg width="9" height="8" viewBox="0 0 9 8">
                <path d="M1 0.5 L8 7.5 M8 0.5 L1 7.5" stroke="#fff" strokeWidth="1.8" />
              </svg>
            </ControlButton>
          </WindowControls>
        </TitleBar>

        <MenuBar>
          {menuItems.map((item) => (
            <MenuItem key={item}>{item}</MenuItem>
          ))}
          <UndockArrow>
            <svg width="8" height="6" viewBox="0 0 8 6">
              <path d="M0 0.5 H3 L5 2.5 L6 1 H8 V6 H2 V4.5 L4 3.5 L2.5 2 H0 Z" fill="#000" />
            </svg>
          </UndockArrow>
        </MenuBar>

        <ToolBar>
          <ToolButton><NewIcon /></ToolButton>
          <ToolButton><OpenIcon /></ToolButton>
          <ToolButton><SaveIcon /></ToolButton>
          <ToolButton><PrintIcon /></ToolButton>
          <ToolSeparator $before={3} $after={6} />
          <ToolButton><PointerIcon /></ToolButton>
          <ToolSeparator $before={1} $after={4} />
          <ToolButton><ZoomIcon plus /></ToolButton>
          <ToolButton><ZoomIcon /></ToolButton>
          <ToolButton><HandIcon /></ToolButton>
          <ToolButton><RotateIcon /></ToolButton>
          <ToolButton><DataCursorIcon /></ToolButton>
          <ToolButton><BrushIcon /></ToolButton>
          <DropArrow />
          <ToolSeparator $before={5} $after={4} />
          <ToolButton><LinkIcon /></ToolButton>
          <ToolSeparator $before={3} $after={4} />
          <ToolButton $active><ColorbarIcon /></ToolButton>
          <ToolButton><LegendIcon /></ToolButton>
          <ToolSeparator $before={3} $after={4} />
          <ToolButton><HideIcon /></ToolButton>
          <ToolButton><DockIcon /></ToolButton>
        </ToolBar>

        <FigureArea>
          <HeatmapFrame>
            <Heatmap />
          </HeatmapFrame>
          <Colorbar />
          <TickColumn>
            {colorbarTicks.map((tick) => (
              <Tick key={tick}>{tick}</Tick>
            ))}
          </TickColumn>
        </FigureArea>

        <Taskbar>
          <StartButton><WindowsLogo /></StartButton>
          <TaskSlot><SigmaIcon /></TaskSlot>
          <TaskSlot><SnipIcon /></TaskSlot>
          <TaskSlot $state="open"><AcrobatIcon /></TaskSlot>
          <TaskSlot $state="open"><ChromeIcon /></TaskSlot>
          <TaskSlot><FirefoxIcon /></TaskSlot>
          <TaskSlot $state="open"><ExplorerIcon /></TaskSlot>
          <TaskSlot><WordIcon /></TaskSlot>
          <ActiveGroup>
            <ActiveSlot $state="active"><MatlabLogo size={33} /></ActiveSlot>
            <StackEdge />
          </ActiveGroup>
          <Tray>
            <TrayIcon $width={16}><TrayArrow /></TrayIcon>
            <TrayIcon $width={27}><FlagIcon /></TrayIcon>
            <TrayIcon $width={24}><NetworkIcon /></TrayIcon>
            <TrayText $width={38} $gap={3}>ENG<br />INTL</TrayText>
            <TrayText $width={68}>7:46 PM<br />10/8/2018</TrayText>
            <TrayIcon $width={9} />
          </Tray>
        </Taskbar>
      </Page>
    </>
  );
}
